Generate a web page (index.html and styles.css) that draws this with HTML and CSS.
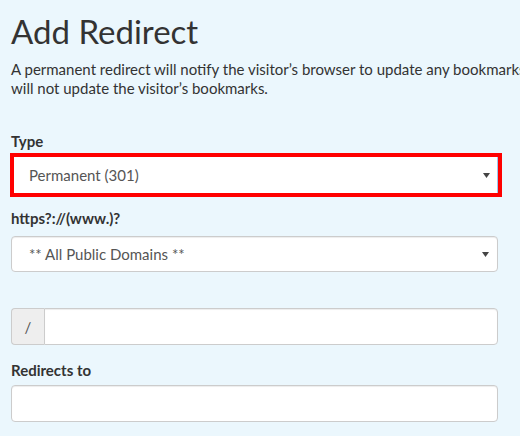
FILE: index.html
```html
<!DOCTYPE html>
<html>
<head>
<meta charset="utf-8">
<link rel="stylesheet" href="styles.css">
</head>
<body>
<div class="page">
  <h1 class="title">Add Redirect</h1>
  <p class="intro"><span class="line">A permanent redirect will notify the visitor’s browser to update any bookmarks that are linked to the page that is being redirected. Temporary redirects</span><span class="line">will not update the visitor’s bookmarks.</span></p>

  <div class="field field-type">
    <div class="label">Type</div>
    <div class="select select-focus">
      <span class="select-text">Permanent (301)</span>
      <svg class="caret" width="7" height="5" viewBox="0 0 7 5"><path d="M0 0H7L3.5 5Z" fill="#444"/></svg>
    </div>
  </div>

  <div class="field field-domain">
    <div class="label">https?://(www.)?</div>
    <div class="select">
      <span class="select-text">** All Public Domains **</span>
      <svg class="caret" width="7" height="5" viewBox="0 0 7 5"><path d="M0 0H7L3.5 5Z" fill="#444"/></svg>
    </div>
  </div>

  <div class="input-group">
    <div class="addon">/</div>
    <div class="input input-joined"></div>
  </div>

  <div class="field field-target">
    <div class="label">Redirects to</div>
    <div class="input"></div>
  </div>
</div>
</body>
</html>
```

FILE: styles.css
```css
html, body {
  margin: 0;
  padding: 0;
  background: #ebf7fd;
  overflow: hidden;
}
body {
  font-family: Lato, "Open Sans", sans-serif;
  color: #333;
  width: 520px;
  height: 436px;
}
.page {
  padding: 13px 0 0 11px;
  width: 487px;
}
.title {
  margin: 0;
  font-size: 33px;
  line-height: 36.3px;
  font-weight: 400;
  color: #333;
}
.intro {
  margin: 11px 0 0 0;
  font-size: 15px;
  line-height: 19px;
  white-space: nowrap;
}
.line {
  display: block;
}
.label {
  font-size: 15px;
  font-weight: 700;
  line-height: 20px;
  color: #333;
}
.field-type {
  margin-top: 33px;
}
.field-type .label {
  margin-bottom: 2px;
}
.select {
  box-sizing: border-box;
  height: 36px;
  background: #fff;
  border: 1px solid #ccc;
  border-radius: 4px;
  display: flex;
  align-items: center;
  justify-content: space-between;
  padding: 0 8px 0 17px;
  font-size: 15px;
  color: #555;
  box-shadow: inset 0 1px 1px rgba(0,0,0,0.075);
}
.select-focus {
  margin-left: -1px;
  width: 492px;
  height: 44px;
  border: 4px solid #f00;
  border-radius: 0;
  padding: 0 8px 0 15px;
  box-shadow: inset -1px 0 0 #9cc9ee;
}
.caret {
  display: block;
}
.field-domain {
  margin-top: 11px;
}
.field-domain .label {
  margin-bottom: 8px;
}
.input-group {
  margin-top: 36px;
  display: flex;
  height: 37px;
}
.addon {
  box-sizing: border-box;
  width: 33px;
  background: #eee;
  border: 1px solid #ccc;
  border-right: 0;
  border-radius: 4px 0 0 4px;
  display: flex;
  align-items: center;
  justify-content: center;
  font-size: 15px;
  color: #555;
}
.input {
  box-sizing: border-box;
  height: 37px;
  background: #fff;
  border: 1px solid #ccc;
  border-radius: 4px;
  box-shadow: inset 0 1px 1px rgba(0,0,0,0.075);
}
.input-joined {
  flex: 1;
  border-radius: 0 4px 4px 0;
}
.field-target {
  margin-top: 15px;
}
.field-target .label {
  margin-bottom: 5px;
}
```
